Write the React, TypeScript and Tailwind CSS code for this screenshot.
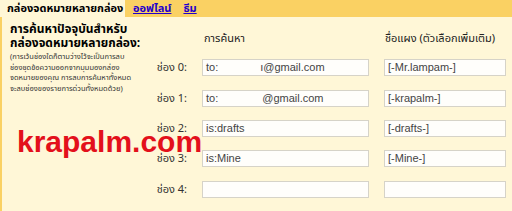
import React from 'react';

type Row = {
  label: string;
  search: React.ReactNode;
  name: string;
};

const thai = "font-['Tahoma','Noto_Sans_Thai','Noto_Sans','DejaVu_Sans',sans-serif]";

const rows: Row[] = [
  {
    label: 'ช่อง 0:',
    search: (
      <>
        to:<span className="inline-block w-[42px]" />ı@gmail.com
      </>
    ),
    name: '[-Mr.lampam-]',
  },
  {
    label: 'ช่อง 1:',
    search: (
      <>
        to:<span className="inline-block w-[44px]" />@gmail.com
      </>
    ),
    name: '[-krapalm-]',
  },
  { label: 'ช่อง 2:', search: 'is:drafts', name: '[-drafts-]' },
  { label: 'ช่อง 3:', search: 'is:Mine', name: '[-Mine-]' },
  { label: 'ช่อง 4:', search: '', name: '' },
];

const Box: React.FC<{ w: string; children?: React.ReactNode }> = ({ w, children }) => (
  <div
    className={`${w} h-[17px] border border-[#d6d3c8] bg-[#fffefb] px-[3px] text-[11px] leading-[15px] text-[#444] whitespace-nowrap overflow-hidden font-['Liberation_Sans',Arial,sans-serif]`}
  >
    {children}
  </div>
);

export default function App() {
  return (
    <div className={`relative w-[512px] h-[211px] overflow-hidden bg-[#fff7d7] ${thai}`}>
      {/* tab bar */}
      <div className="flex h-[17px] bg-[#fad163] items-stretch">
        <div className="w-[125px] bg-[#fff7d7] pl-[7px] text-[11px] font-bold leading-[17px] text-black whitespace-nowrap">
          กล่องจดหมายหลายกล่อง
        </div>
        <a className="ml-[8px] text-[11px] font-bold leading-[17px] text-[#2200cc] underline">ออฟไลน์</a>
        <a className="ml-[12px] text-[11px] font-bold leading-[17px] text-[#2200cc] underline">ธีม</a>
      </div>

      {/* body */}
      <div className="flex h-[194px] border-l-2 border-[#fad163]">
        <div className="w-[148px] shrink-0 pl-[8px] pt-[5px]">
          <p className="text-[12px] font-bold leading-[14px] text-black whitespace-nowrap">
            การค้นหาปัจจุบันสำหรับ
            <br />
            กล่องจดหมายหลายกล่อง:
          </p>
          <p className="mt-[2px] text-[7.5px] leading-[10.5px] text-[#333] whitespace-nowrap">
            (การเว้นช่องใดก็ตามว่างไว้จะเป็นการลบ
            <br />
            ช่องชุดข้อความออกจากมุมมองกล่อง
            <br />
            จดหมายของคุณ การลบการค้นหาทั้งหมด
            <br />
            จะลบช่องของรายการด่วนทั้งหมดด้วย)
          </p>
        </div>

        <div className="flex flex-col">
          <div className="flex h-[44px] items-start pt-[15px] text-[11px] leading-[13px] text-[#222]">
            <div className="w-[52px]" />
            <div className="w-[182px] pl-[2px]">การค้นหา</div>
            <div className="pl-[1px]">ชื่อแผง (ตัวเลือกเพิ่มเติม)</div>
          </div>
          {rows.map((r) => (
            <div key={r.label} className="flex h-[32px] items-start">
              <div className="w-[37px] text-right text-[11px] leading-[17px] text-[#333] whitespace-nowrap">{r.label}</div>
              <div className="w-[15px]" />
              <Box w="w-[167px]">{r.search}</Box>
              <div className="w-[15px]" />
              <Box w="w-[122px]">{r.name}</Box>
            </div>
          ))}
        </div>
      </div>

      {/* watermark */}
      <div className="absolute left-[17px] top-[125px] text-[30px] font-bold leading-[34px] text-[#e3101b] font-['Liberation_Sans',Arial,sans-serif]">
        krapalm.com
      </div>
    </div>
  );
}
